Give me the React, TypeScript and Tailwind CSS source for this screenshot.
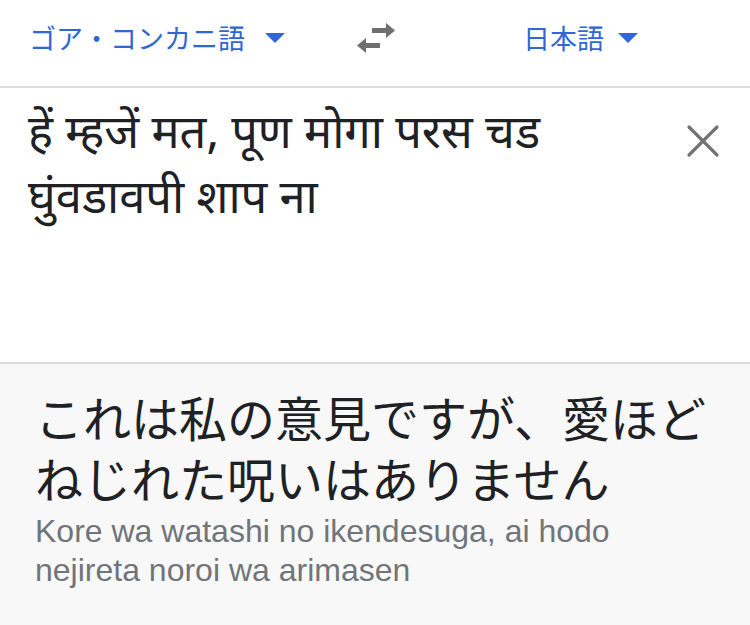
function Caret() {
  return (
    <svg width="20" height="10" viewBox="0 0 20 10" className="shrink-0">
      <path d="M0 0 L20 0 L10 10 Z" fill="#3066d6" />
    </svg>
  );
}

function SwapIcon() {
  return (
    <svg width="38" height="30" viewBox="0 0 38 30" fill="#6f6f6f">
      <path d="M15 5 H29 V0 L38 7.5 L29 15 V10 H15 Z" />
      <path d="M23 20 H9 V15 L0 22.5 L9 30 V25 H23 Z" />
    </svg>
  );
}

function ClearIcon() {
  return (
    <svg width="34" height="34" viewBox="0 0 34 34" stroke="#737373" strokeWidth="3.2" strokeLinecap="round">
      <path d="M3 3 L31 31" />
      <path d="M31 3 L3 31" />
    </svg>
  );
}

export default function App() {
  return (
    <div className="w-[750px] h-[625px] flex flex-col bg-white overflow-hidden font-['Liberation_Sans','Noto_Sans_CJK_JP',sans-serif]">
      <div className="h-[88px] shrink-0 flex items-start pt-[23px] border-b-2 border-[#dcdce0]">
        <div className="w-[327px] flex items-center gap-[20px] pl-[29px] text-[27px] leading-[30px] text-[#3066d6] font-['Noto_Sans_CJK_JP',sans-serif]">
          <span>ゴア・コンカニ語</span>
          <Caret />
        </div>
        <div className="w-[196px] pl-[30px]">
          <SwapIcon />
        </div>
        <div className="flex items-center gap-[14px] text-[27px] leading-[30px] text-[#3066d6] font-['Noto_Sans_CJK_JP',sans-serif]">
          <span>日本語</span>
          <Caret />
        </div>
      </div>

      <div className="h-[276px] shrink-0 flex justify-between border-b-2 border-[#dcdce0] pl-[28px] pr-[30px] pt-[16px]">
        <p className="text-[47px] leading-[65px] text-[#202124] font-['Noto_Sans_Devanagari','Noto_Sans',sans-serif]">
          हें म्हजें मत, पूण मोगा परस चड
          <br />
          घुंवडावपी शाप ना
        </p>
        <div className="pt-[20px]">
          <ClearIcon />
        </div>
      </div>

      <div className="flex-1 bg-[#f8f8f8] pl-[35px] pt-[22px]">
        <p className="text-[48px] leading-[61px] text-[#202124] font-['Noto_Sans_CJK_JP',sans-serif]">
          これは私の意見ですが、愛ほど
          <br />
          ねじれた呪いはありません
        </p>
        <p className="mt-[4px] text-[32px] leading-[39px] text-[#70757a]">
          Kore wa watashi no ikendesuga, ai hodo
          <br />
          nejireta noroi wa arimasen
        </p>
      </div>
    </div>
  );
}
